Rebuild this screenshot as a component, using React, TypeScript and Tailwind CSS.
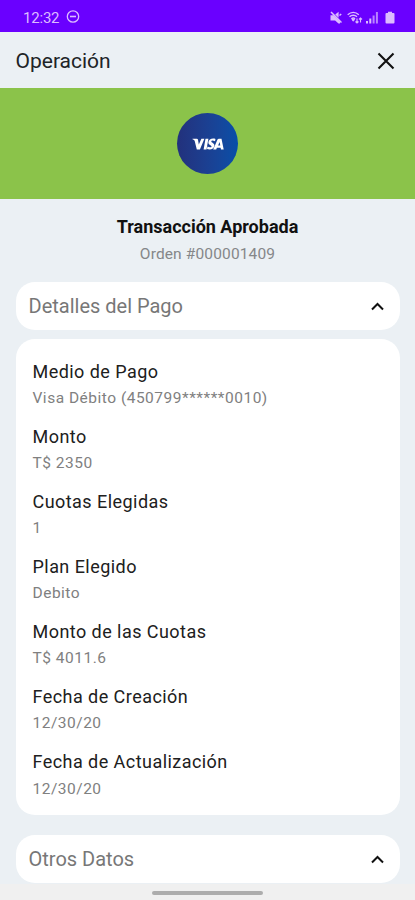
const details = [
  ['Medio de Pago', 'Visa Débito (450799******0010)'],
  ['Monto', 'T$ 2350'],
  ['Cuotas Elegidas', '1'],
  ['Plan Elegido', 'Debito'],
  ['Monto de las Cuotas', 'T$ 4011.6'],
  ['Fecha de Creación', '12/30/20'],
  ['Fecha de Actualización', '12/30/20'],
];

function StatusBar() {
  return (
    <div className="flex h-8 shrink-0 items-center bg-[#6a00ff] pl-[23px] pr-[20px] pt-[2px] text-[#dcbcff]">
      <span className="pt-px text-[15px] leading-4 tracking-[-0.2px]">12:32</span>
      <svg className="ml-[7px]" width="14" height="14" viewBox="0 0 14 14" fill="none" stroke="currentColor">
        <circle cx="7" cy="6.500" r="5.700" strokeWidth="1.300" />
        <path d="M4 6.500h6" strokeWidth="1.600" />
      </svg>
      <div className="ml-auto flex items-center">
        <svg width="12" height="13" viewBox="0 0 12 13" fill="currentColor">
          <path d="M.5 4.200h3.100L10 10.600v1.900H8.500L5.100 9.500H.5zM5.200 3.600 8.600.8v6z" />
          <path d="m1 1 10.500 10.500M9.500 4.500 11.200 3" stroke="currentColor" strokeWidth="1.500" />
        </svg>
        <svg className="ml-[5px]" width="16" height="13" viewBox="0 0 16 13" fill="none" stroke="currentColor">
          <path d="M.7 3.800C4 .5 8.500.5 11.800 3.800M2.500 5.800c2.100-2.100 5.400-2.100 7.500 0M4.400 7.800c1-.9 2.700-.9 3.700 0" strokeWidth="1.400" />
          <path d="m5 8.500 1.300 1.700L7.500 8.500z" fill="currentColor" />
          <path d="M10 12V7.500M8.500 10.500 10 12l1.500-1.500M13.500 7v4.500M12 8.500 13.500 7 15 8.500" strokeWidth="1.100" />
        </svg>
        <svg className="ml-[2px]" width="14" height="13" viewBox="0 0 14 13" fill="currentColor">
          <path d="M1 10h2v2.500H1zM4.300 7.500h2v5h-2z" />
          <path d="M7.600 4.500h2v8h-2zM10.900 1h2v11.500h-2z" opacity=".7" />
        </svg>
        <svg className="ml-[6px]" width="10" height="13" viewBox="0 0 10 13" fill="currentColor">
          <path d="M3 .7h4v1.300h1.500q1 0 1 1v8.500q0 1-1 1h-7q-1 0-1-1V3q0-1 1-1H3z" />
        </svg>
      </div>
    </div>
  );
}

function SectionHeader({ title }: { title: string }) {
  return (
    <button className="flex h-[47.500px] w-full shrink-0 items-center justify-between rounded-[19px] bg-white pl-[13px] pr-[16px] text-left">
      <span className="pt-px text-[20px] leading-6 tracking-[0px] text-[#777]">{title}</span>
      <svg className="mt-px" width="13" height="9" viewBox="0 0 13 9" fill="none" stroke="#111" strokeWidth="2">
        <path d="m1 7.500 5.500-5.500L12 7.500" />
      </svg>
    </button>
  );
}

export default function App() {
  return (
    <div className="flex h-[900px] w-[415px] flex-col overflow-hidden bg-[#ebf0f4] font-['Roboto',sans-serif]">
      <StatusBar />
      <header className="flex h-14 shrink-0 items-center justify-between pl-[15.500px] pr-[20px] pt-[2px]">
        <h1 className="text-[21px] leading-6 tracking-[0px] text-[#202326]">Operación</h1>
        <svg width="18" height="18" viewBox="0 0 18 18" fill="none" stroke="#111" strokeWidth="2.100">
          <path d="m1.500 1.500 15 15m0-15-15 15" />
        </svg>
      </header>
      <div className="flex h-[111px] shrink-0 items-center justify-center bg-[#8bc34a]">
        <div className="flex size-[61px] items-center justify-center rounded-full bg-gradient-to-r from-[#22317c] to-[#064fa8]">
          <svg width="32" height="12" viewBox="0 0 32 12" fill="white" aria-label="VISA">
            <path d="M.5.700h4.300q1 0 1.200 1l.8 4.700L9.400.700h3L7.900 11.400H4.800L2.700 3Q2.500 2 .5 1.300zM13.500.700h2.900l-1.900 10.700h-2.900zM23.500.900 23 3.200q-3.600-1.400-3.700.2c0 1.200 3.300 1.500 3.100 4-.2 3.500-4 4.900-7.400 3.600l.5-2.400c1.700.9 4 .9 4-.2.1-1.300-3.200-1.300-3.100-4.100.1-3.200 4-4.500 7.100-3.400zM26.900.700h2.600l2.200 10.700H29l-.4-1.700h-3.700l-.7 1.700h-3L25.500 1.600q.4-.9 1.400-.9zm.7 3.200-1.500 3.700h2.200z" />
          </svg>
        </div>
      </div>
      <div className="flex h-[83px] shrink-0 flex-col items-center pt-[16px]">
        <h2 className="text-[18px] font-bold leading-6 tracking-[0px] text-[#111]">Transacción Aprobada</h2>
        <p className="mt-[5px] text-[15.500px] leading-5 tracking-[0.140px] text-[#858789]">Orden #000001409</p>
      </div>
      <main className="flex shrink-0 flex-col px-[15.500px]">
        <SectionHeader title="Detalles del Pago" />
        <dl className="mt-[9.500px] h-[476px] rounded-[19px] bg-white pl-[17px] pt-[20.500px]">
          {details.map(([label, value]) => (
            <div key={label} className="h-[65.100px]">
              <dt className="text-[18px] leading-6 tracking-[0.450px] text-[#202020]">{label}</dt>
              <dd className="mt-[4.500px] text-[15.500px] leading-5 tracking-[0.500px] text-[#808080]">{value}</dd>
            </div>
          ))}
        </dl>
        <div className="mt-5">
          <SectionHeader title="Otros Datos" />
        </div>
      </main>
      <div className="mt-px flex grow justify-center bg-[#f0f0f0] pt-[7px]">
        <div className="h-[4px] w-[111px] rounded-full bg-[#adadad]" />
      </div>
    </div>
  );
}
